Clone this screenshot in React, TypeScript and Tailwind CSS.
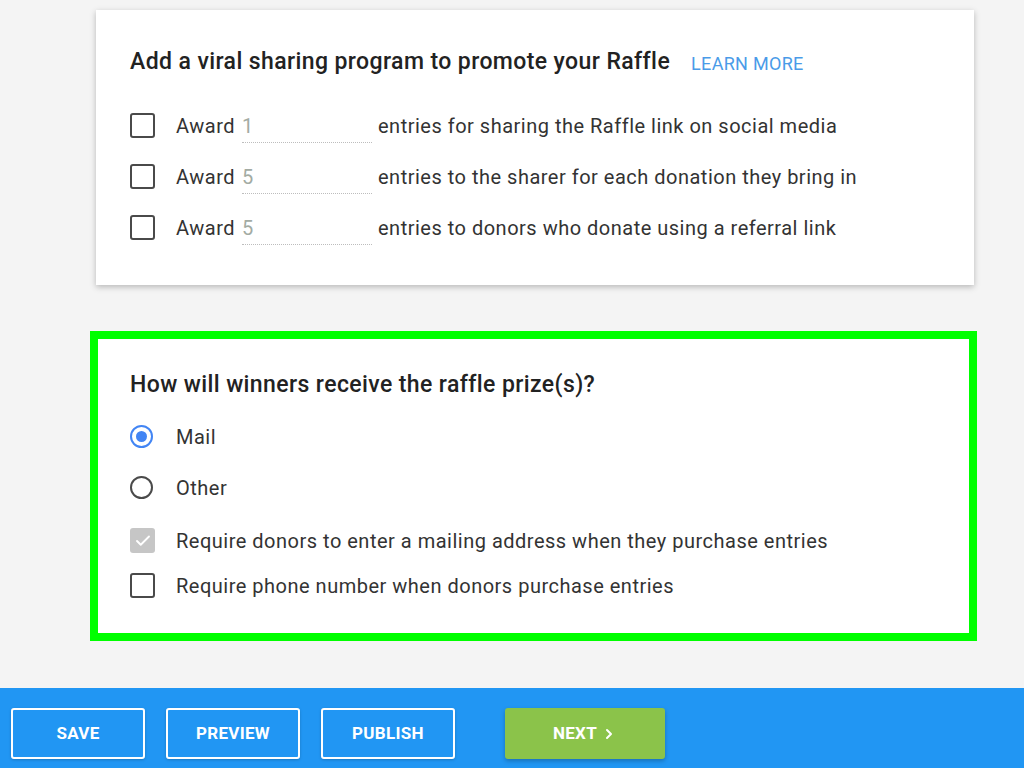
import { Check, ChevronRight } from 'lucide-react';

/* ---------- Teile ---------- */

function Box({ checked = false }: { checked?: boolean }) {
  if (checked) {
    return (
      <span className="grid h-[25px] w-[25px] shrink-0 place-items-center rounded-[3px] bg-[#c6c6c6]">
        <Check className="h-[18px] w-[18px] text-white" strokeWidth={2.5} />
      </span>
    );
  }
  return (
    <span className="h-[25px] w-[25px] shrink-0 rounded-[3px] border-2 border-[#4a4a4a] bg-white" />
  );
}

function Radio({ checked = false }: { checked?: boolean }) {
  return (
    <span
      className={
        'grid h-[23px] w-[23px] shrink-0 place-items-center rounded-full border-2 ' +
        (checked ? 'border-[#4285f4]' : 'border-[#4a4a4a]')
      }
    >
      {checked && <span className="h-[11px] w-[11px] rounded-full bg-[#4285f4]" />}
    </span>
  );
}

function AwardRow({ n, text }: { n: string; text: string }) {
  return (
    <div className="flex h-[51px] items-center">
      <Box />
      <span className="ml-[21px] w-[66px]">Award</span>
      <span className="relative h-[28px] w-[130px] leading-[28px] text-[#a3aba3]">
        {n}
        <span className="absolute bottom-[-3px] left-0 right-0 border-b border-dotted border-[#bdbdbd]" />
      </span>
      <span className="ml-[6px]">{text}</span>
    </div>
  );
}

function BarButton({ label }: { label: string }) {
  return (
    <button className="h-[51px] w-[134px] rounded-[3px] border-2 border-white text-[17px] font-bold tracking-[0.3px] text-white shadow-[0_1px_3px_rgba(0,0,0,0.2)]">
      {label}
    </button>
  );
}

/* ---------- Seite ---------- */

export default function App() {
  return (
    <div
      className="flex h-[768px] w-[1024px] flex-col overflow-hidden bg-[#f4f4f4] text-[20px] tracking-[0.5px] text-[#333]"
      style={{ fontFamily: 'Roboto, "Liberation Sans", sans-serif' }}
    >
      <main className="flex-1 pt-[10px]">
        {/* Viral-Sharing-Karte */}
        <section className="ml-[96px] w-[878px] bg-white px-[34px] pb-[32px] pt-[38px] shadow-[0_2px_6px_rgba(0,0,0,0.25)]">
          <div className="flex h-[28px] items-center">
            <h2 className="text-[23px] font-medium leading-[28px] tracking-[0.4px] text-[#222]">
              Add a viral sharing program to promote your Raffle
            </h2>
            <a className="ml-[21px] mt-[2px] text-[18px] tracking-[0.3px] text-[#4a9be8]">LEARN MORE</a>
          </div>
          <div className="mt-[24px]">
            <AwardRow n="1" text="entries for sharing the Raffle link on social media" />
            <AwardRow n="5" text="entries to the sharer for each donation they bring in" />
            <AwardRow n="5" text="entries to donors who donate using a referral link" />
          </div>
        </section>

        {/* Preis-Versand (grün markiert) */}
        <section className="ml-[90px] mt-[46px] w-[887px] border-[8px] border-[#00ff00] bg-white pb-[25px] pl-[32px] pt-[32px]">
          <h2 className="text-[23px] font-medium leading-[28px] tracking-[0.4px] text-[#222]">
            How will winners receive the raffle prize(s)?
          </h2>
          <div className="mt-[12px]">
            <div className="flex h-[51px] items-center">
              <Radio checked />
              <span className="ml-[23px]">Mail</span>
            </div>
            <div className="flex h-[51px] items-center">
              <Radio />
              <span className="ml-[23px]">Other</span>
            </div>
          </div>
          <div className="mt-[5px]">
            <div className="flex h-[45px] items-center">
              <Box checked />
              <span className="ml-[21px]">
                Require donors to enter a mailing address when they purchase entries
              </span>
            </div>
            <div className="flex h-[45px] items-center">
              <Box />
              <span className="ml-[21px]">Require phone number when donors purchase entries</span>
            </div>
          </div>
        </section>
      </main>

      {/* Aktionsleiste */}
      <footer className="flex h-[80px] items-start bg-[#2196f3] pl-[11px] pt-[20px]">
        <div className="flex gap-[21px]">
          <BarButton label="SAVE" />
          <BarButton label="PREVIEW" />
          <BarButton label="PUBLISH" />
        </div>
        <button className="ml-[50px] flex h-[51px] w-[160px] items-center justify-center gap-[4px] rounded-[3px] bg-[#8bc34a] text-[17px] font-bold tracking-[0.3px] text-white shadow-[0_2px_4px_rgba(0,0,0,0.25)]">
          NEXT
          <ChevronRight className="h-[16px] w-[16px]" strokeWidth={3} />
        </button>
      </footer>
    </div>
  );
}
